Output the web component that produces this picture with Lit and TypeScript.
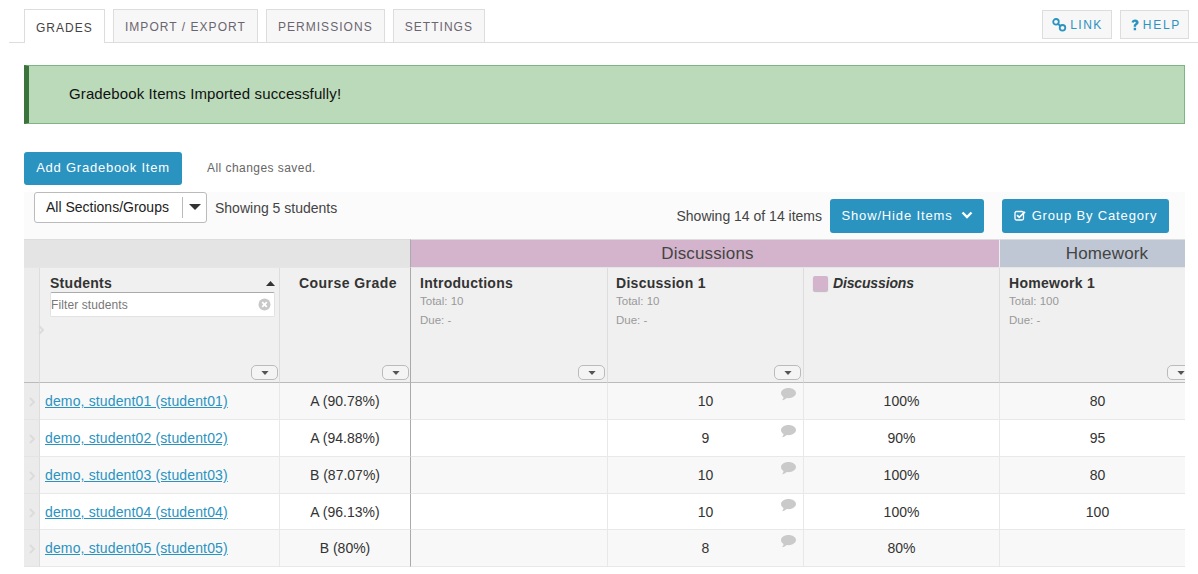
import { LitElement, html, css, svg } from "lit";
import { customElement } from "lit/decorators.js";

const students = [
  { n: "demo, student01 (student01)", g: "A (90.78%)", d: "10", p: "100%", h: "80" },
  { n: "demo, student02 (student02)", g: "A (94.88%)", d: "9", p: "90%", h: "95" },
  { n: "demo, student03 (student03)", g: "B (87.07%)", d: "10", p: "100%", h: "80" },
  { n: "demo, student04 (student04)", g: "A (96.13%)", d: "10", p: "100%", h: "100" },
  { n: "demo, student05 (student05)", g: "B (80%)", d: "8", p: "80%", h: "" },
];

const chevronRight = svg`<svg class="gut-icon" width="6" height="10" viewBox="0 0 6 10"><path d="M1 1l4 4-4 4" fill="none" stroke="#dcdcdc" stroke-width="2"/></svg>`;
const caretDown = svg`<svg width="8" height="4" viewBox="0 0 9 5"><path d="M0 0h9L4.500 5z" fill="#555"/></svg>`;
const bubble = svg`<svg class="bubble" width="15" height="13" viewBox="0 0 15 13"><path d="M7.500 0C11.600 0 15 2.300 15 5.100S11.600 10.200 7.500 10.200c-.6 0-1.200 0-1.700-.1C4.500 11.300 2.800 12 1 12.300c.8-1 1.400-2 1.500-3.300C1 8.100 0 6.700 0 5.100 0 2.300 3.400 0 7.500 0z" fill="#cacaca"/></svg>`;

@customElement("app-root")
export class AppRoot extends LitElement {
  static styles = css`
    :host { display: block; width: 1198px; height: 574px; overflow: hidden; background: #fff; font-family: "Liberation Sans", Arial, sans-serif; color: #333; font-size: 14px; }
    .tabbar { display: flex; align-items: flex-end; justify-content: space-between; height: 43px; margin-left: 9px; padding: 0 9px 0 15px; border-bottom: 1px solid #ddd; box-sizing: border-box; }
    .tabs { display: flex; gap: 8px; }
    .tab { height: 33px; box-sizing: border-box; border: 1px solid #ddd; border-bottom: none; background: #f7f7f7; color: #6b6570; font-size: 12px; letter-spacing: 1.04px; display: flex; align-items: center; padding: 1px 11px 0; text-transform: uppercase; }
    .tab.on { background: #fff; color: #444; height: 34px; margin-bottom: -1px; padding: 2px 11px 0; letter-spacing: 1.04px; }
    .tabr { display: flex; gap: 8px; margin-bottom: 3px; }
    .btnr { height: 29px; box-sizing: border-box; border: 1px solid #ddd; background: #f7f7f7; color: #2a93c0; font-size: 12px; letter-spacing: 1.5px; display: flex; align-items: center; gap: 3px; padding: 0 8px 0 9px; }
    .btnr.help { gap: 4px; padding: 0 7px 0 10px; letter-spacing: 1.7px; }
    .alert { margin: 22px 13px 0 24px; height: 59px; box-sizing: border-box; background: #bbdaba; border: 1px solid #7fb584; border-left: 5px solid #3a733c; padding: 0 0 2px 40px; display: flex; align-items: center; color: #111; font-size: 15px; letter-spacing: 0.12px; }
    .actions { display: flex; align-items: center; margin: 28px 0 0 24px; height: 33px; }
    .btn { background: #2a93c0; color: #fff; border-radius: 3px; font-size: 13px; letter-spacing: 0.76px; display: flex; align-items: center; justify-content: center; box-sizing: border-box; padding-bottom: 2px; }
    .add { width: 158px; height: 33px; }
    .saved { margin-left: 25px; font-size: 12px; letter-spacing: 0.45px; color: #666; padding-bottom: 1px; }
    .toolbar { margin: 7px 13px 0 24px; height: 47px; background: #fbfbfb; display: flex; justify-content: space-between; }
    .tl { display: flex; align-items: flex-start; padding-left: 10px; }
    .select { width: 173px; height: 31px; box-sizing: border-box; border: 1px solid #bbb; border-radius: 3px; background: #fff; display: flex; align-items: center; color: #222; padding-bottom: 1px; }
    .select .lbl { width: 147px; padding-left: 11px; box-sizing: border-box; }
    .select .sep { width: 1px; height: 21px; background: #bbb; }
    .select .car { flex: 1; display: flex; justify-content: center; padding-left: 1px; }
    .tl .cnt { margin: 8px 0 0 8px; color: #444; }
    .tr { display: flex; align-items: flex-start; padding: 7px 16px 0 0; }
    .tr .cnt { margin-top: 9px; color: #444; }
    .sh { width: 154px; height: 34px; margin-left: 8px; gap: 8px; letter-spacing: 0.85px; }
    .gc { width: 167px; height: 34px; margin-left: 18px; gap: 6px; letter-spacing: 0.85px; }
    .grid { margin: 0 13px 0 24px; width: 1161px; overflow: hidden; display: grid; grid-template-columns: 16px 240px 131px 197px 196px 196px 196px; grid-template-rows: 29px 115px 37px 37px 37px 36px 37px; }
    .grid > * { box-sizing: border-box; }
    .cat { display: flex; align-items: center; justify-content: center; font-size: 17px; letter-spacing: 0.15px; color: #444; border-top: 1px solid #ddd; border-bottom: 1px solid #e6e6e6; }
    .blank { grid-column: 1 / 4; background: #e4e4e4; border-right: 1px solid #aaa; }
    .disc { grid-column: 4 / 7; background: #d4b4cd; border-right: 1px solid #eee; padding-left: 5px; }
    .hw { background: #bfc7d4; padding-left: 18px; }
    .gut { background: #ebebeb; border-right: 1px solid #ddd; display: flex; align-items: center; justify-content: center; }
    .gut.head { align-items: flex-start; justify-content: flex-end; padding-top: 57px; background: #ececec; border-bottom: 1px solid #bbb; }
    .gut.head svg { margin-right: -5px; position: relative; z-index: 1; }
    .h { background: #f0f0f0; border-right: 1px solid #ddd; border-bottom: 1px solid #bbb; position: relative; padding: 7px 9px; }
    .h.thick, .c.thick { border-right: 1px solid #aaa; }
    .ttl { font-weight: bold; font-size: 14px; letter-spacing: 0.28px; color: #333; line-height: 16px; }
    .sub { font-size: 11.500px; color: #999; line-height: 18px; margin-top: 1px; }
    .sortrow { display: flex; justify-content: space-between; align-items: center; }
    .filter { margin-top: 1px; height: 25px; box-sizing: border-box; border: 1px solid #e2e2e2; border-top-color: #aaa; background: #fff; border-radius: 2px; display: flex; align-items: center; justify-content: space-between; padding: 0 3px 0 0; font-size: 12px; letter-spacing: 0.1px; color: #777; width: 225px; }
    .stu { padding-left: 10px; padding-right: 4px; }
    .center { text-align: center; padding: 7px 0 0 6px; }
    .center .ttl { letter-spacing: 0.45px; }
    .tight { padding-left: 8px; }
    .dd { position: absolute; right: 1px; bottom: 2px; width: 27px; height: 15px; box-sizing: border-box; border: 1px solid #bbb; border-radius: 5px; display: flex; align-items: center; justify-content: center; background: #f4f4f4; }
    .dd.in { right: 2px; }
    .swatch { display: inline-block; width: 15px; height: 15px; background: #d4b4cd; border-radius: 2px; box-shadow: 0 1px 1px #bbb; margin-right: 5px; vertical-align: -3px; }
    .it { font-style: italic; letter-spacing: -0.15px; }
    .c { border-right: 1px solid #e8e8e8; border-bottom: 1px solid #e8e8e8; display: flex; align-items: center; justify-content: center; position: relative; color: #333; }
    .c.odd { background: #f8f8f8; }
    .c.name { justify-content: flex-start; padding-left: 5px; }
    .c.name a { color: #2a93c0; text-decoration: underline; letter-spacing: 0.14px; }
    .bubble { position: absolute; right: 7px; top: 5px; }
    .gut.r { border-bottom: 1px solid #e4e4e4; padding-top: 2px; }
    .gut-icon { display: block; }
  `;

  render() {
    return html`
      <div class="tabbar">
        <div class="tabs">
          <div class="tab on">Grades</div>
          <div class="tab">Import / Export</div>
          <div class="tab">Permissions</div>
          <div class="tab">Settings</div>
        </div>
        <div class="tabr">
          <div class="btnr">
            <svg width="15" height="14" viewBox="0 0 15 14" fill="none" stroke="#2a93c0" stroke-width="1.800"><circle cx="4" cy="3.800" r="2.800"/><circle cx="10.500" cy="9.800" r="2.800"/><path d="M5.500 5.500l3.500 3"/></svg>
            <span>LINK</span>
          </div>
          <div class="btnr help">
            <svg width="8" height="12" viewBox="0 0 8 12"><path d="M.6 3.200C.9 1.400 2.300.6 4.100.6c2 0 3.500 1.100 3.500 2.800 0 1.300-.8 2-1.700 2.600-.6.400-.8.700-.8 1.300v.4H2.700v-.7c0-1 .4-1.600 1.200-2.200.5-.4.900-.7.900-1.200 0-.5-.4-.8-.9-.8-.6 0-1 .4-1.100 1zM2.700 8.800h2.400v2.400H2.700z" fill="#2a93c0"/></svg>
            <span>HELP</span>
          </div>
        </div>
      </div>

      <div class="alert">Gradebook Items Imported successfully!</div>

      <div class="actions">
        <div class="btn add">Add Gradebook Item</div>
        <div class="saved">All changes saved.</div>
      </div>

      <div class="toolbar">
        <div class="tl">
          <div class="select">
            <span class="lbl">All Sections/Groups</span><span class="sep"></span>
            <span class="car"><svg width="12" height="6" viewBox="0 0 12 6"><path d="M0 0h12L6 6z" fill="#333"/></svg></span>
          </div>
          <div class="cnt">Showing 5 students</div>
        </div>
        <div class="tr">
          <div class="cnt">Showing 14 of 14 items</div>
          <div class="btn sh">
            <span>Show/Hide Items</span>
            <svg width="12" height="8" viewBox="0 0 12 8"><path d="M1.500 1.500L6 6l4.500-4.500" fill="none" stroke="#fff" stroke-width="2.400"/></svg>
          </div>
          <div class="btn gc">
            <svg width="12" height="11" viewBox="0 0 12 11" fill="none"><rect x="1" y="1.500" width="8.500" height="8.500" rx="1.500" stroke="#fff" stroke-width="1.300"/><path d="M3 5.200l2.200 2.200L11 1.800" stroke="#fff" stroke-width="1.700"/></svg>
            <span>Group By Category</span>
          </div>
        </div>
      </div>

      <div class="grid">
        <div class="cat blank"></div>
        <div class="cat disc">Discussions</div>
        <div class="cat hw">Homework</div>

        <div class="gut head">${chevronRight}</div>
        <div class="h stu">
          <div class="sortrow"><span class="ttl">Students</span><svg width="9" height="5" viewBox="0 0 9 5"><path d="M0 5h9L4.500 0z" fill="#333"/></svg></div>
          <div class="filter"><span>Filter students</span>
            <svg width="13" height="13" viewBox="0 0 13 13"><circle cx="6.500" cy="6.500" r="6" fill="#c8c8c8"/><path d="M4.200 4.200l4.600 4.600M8.800 4.200l-4.600 4.600" stroke="#fff" stroke-width="1.800"/></svg>
          </div>
          <div class="dd">${caretDown}</div>
        </div>
        <div class="h thick center"><div class="ttl">Course Grade</div><div class="dd">${caretDown}</div></div>
        <div class="h"><div class="ttl">Introductions</div><div class="sub">Total: 10</div><div class="sub">Due: -</div><div class="dd in">${caretDown}</div></div>
        <div class="h tight"><div class="ttl">Discussion 1</div><div class="sub">Total: 10</div><div class="sub">Due: -</div><div class="dd in">${caretDown}</div></div>
        <div class="h"><div class="ttl it"><span class="swatch"></span>Discussions</div></div>
        <div class="h"><div class="ttl">Homework 1</div><div class="sub">Total: 100</div><div class="sub">Due: -</div><div class="dd">${caretDown}</div></div>

        ${students.map((s, i) => {
          const o = i % 2 === 0 ? "odd" : "";
          return html`
            <div class="gut r">${chevronRight}</div>
            <div class="c name ${o}"><a>${s.n}</a></div>
            <div class="c thick ${o}">${s.g}</div>
            <div class="c ${o}"></div>
            <div class="c ${o}">${s.d}${bubble}</div>
            <div class="c ${o}">${s.p}</div>
            <div class="c ${o}">${s.h}</div>
          `;
        })}
      </div>
    `;
  }
}
